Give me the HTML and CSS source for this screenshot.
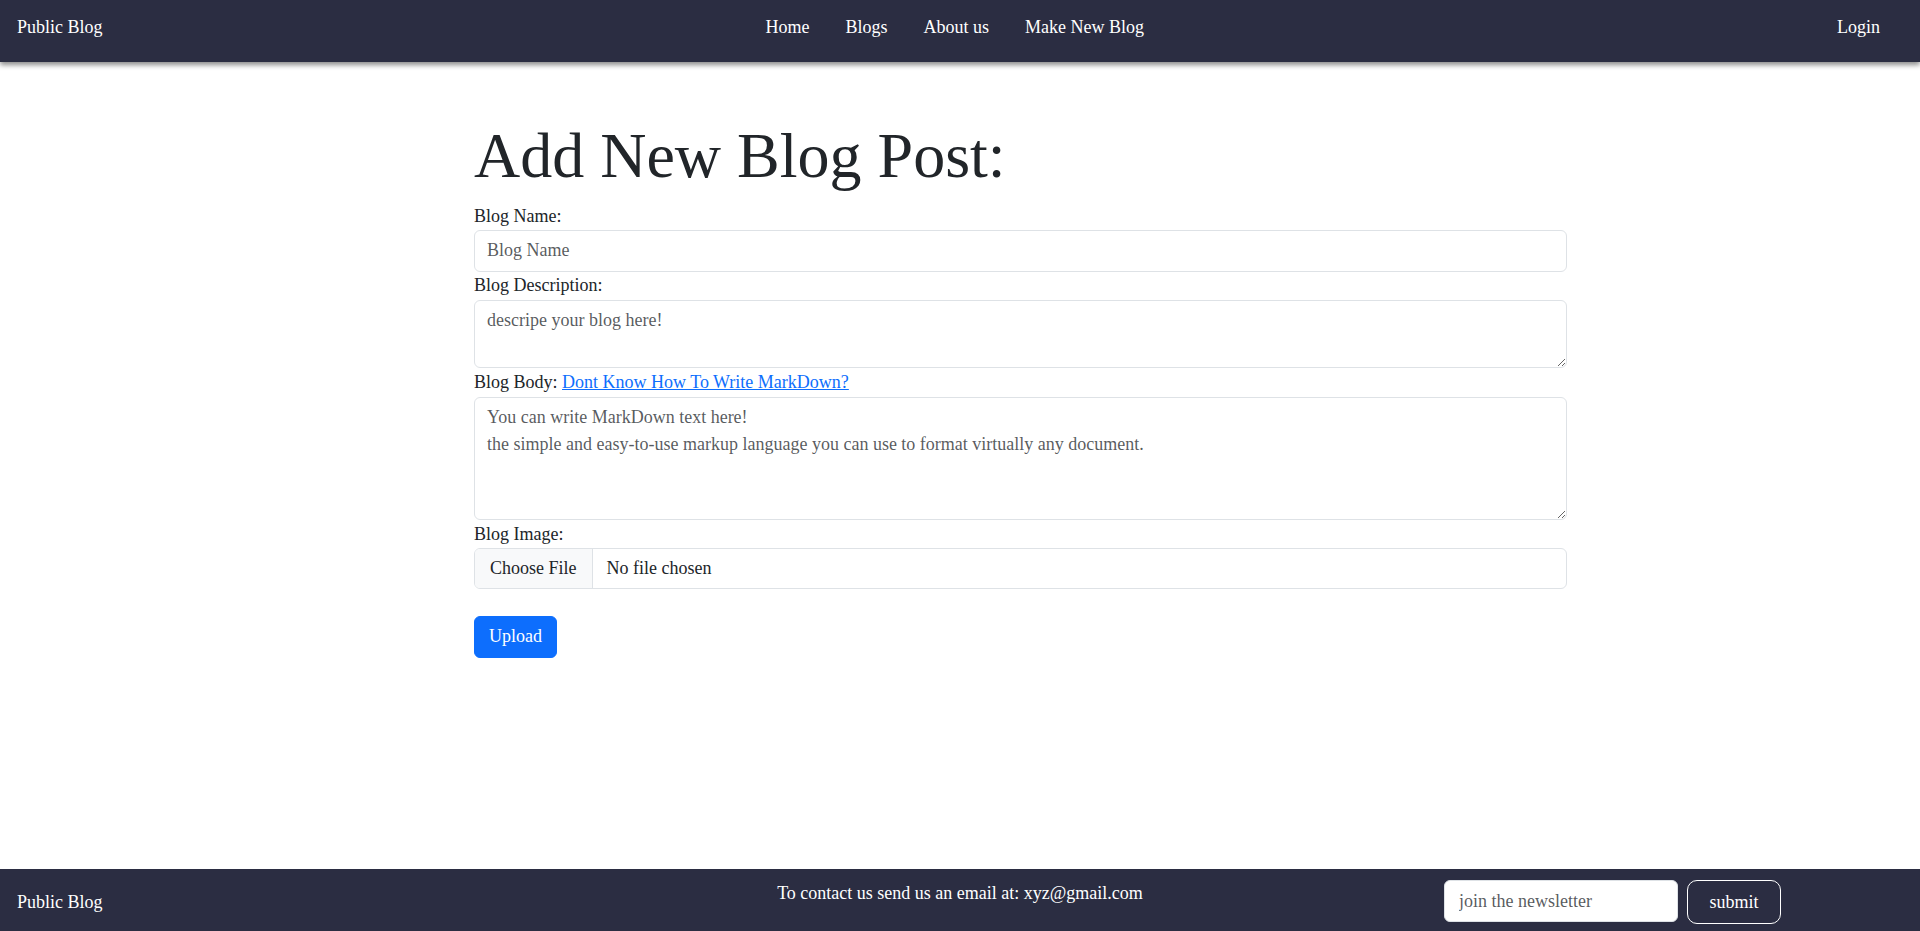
FILE: index.html
```html
<!DOCTYPE html>
<html lang="en">
<head>
<meta charset="utf-8">
<title>Public Blog - Add New Blog Post</title>
<link rel="stylesheet" href="styles.css">
</head>
<body>
<nav class="navbar">
  <a class="brand" href="#">Public Blog</a>
  <ul class="nav-links">
    <li><a href="#">Home</a></li>
    <li><a href="#">Blogs</a></li>
    <li><a href="#">About us</a></li>
    <li><a href="#">Make New Blog</a></li>
  </ul>
  <a class="login" href="#">Login</a>
</nav>

<main class="page">
  <form class="post-form">
    <h1 class="title">Add New Blog Post:</h1>
    <label class="field-label" for="name">Blog Name:</label>
    <input class="field" id="name" type="text" placeholder="Blog Name">
    <label class="field-label" for="desc">Blog Description:</label>
    <textarea class="field area area-desc" id="desc" placeholder="descripe your blog here!"></textarea>
    <label class="field-label" for="body">Blog Body: <a class="md-link" href="#">Dont Know How To Write MarkDown?</a></label>
    <textarea class="field area area-body" id="body" placeholder="You can write MarkDown text here!&#10;the simple and easy-to-use markup language you can use to format virtually any document."></textarea>
    <label class="field-label" for="img">Blog Image:</label>
    <input class="field file" id="img" type="file">
    <button class="btn-upload" type="button">Upload</button>
  </form>
</main>

<footer class="footer">
  <span class="foot-brand">Public Blog</span>
  <p class="contact">To contact us send us an email at: xyz@gmail.com</p>
  <form class="newsletter">
    <input class="news-input" type="email" placeholder="join the newsletter">
    <button class="news-btn" type="button">submit</button>
  </form>
</footer>
</body>
</html>
```

FILE: styles.css
```css
* { box-sizing: border-box; }

html, body { height: 100%; }

body {
  margin: 0;
  min-height: 100vh;
  display: flex;
  flex-direction: column;
  font-family: "Liberation Serif", "Times New Roman", serif;
  font-size: 18px;
  line-height: 1.5;
  color: #212529;
  background: #fff;
}

a { text-decoration: none; color: inherit; }

/* NAVBAR */
.navbar {
  height: 62px;
  flex: 0 0 auto;
  display: flex;
  align-items: flex-start;
  padding: 14px 40px 0 17px;
  background: #2b2d42;
  color: #fff;
  box-shadow: 0 3px 5px rgba(0, 0, 0, 0.45);
  position: relative;
  z-index: 2;
}

.brand { color: #fff; }

.nav-links {
  list-style: none;
  margin: 0 0 0 663px;
  padding: 0;
  display: flex;
  gap: 36px;
}

.nav-links a { color: #fff; }

.login { margin-left: auto; color: #fff; }

/* MAIN */
.page {
  flex: 1 0 auto;
  padding: 56px 0 0 474px;
}

.post-form {
  width: 1093px;
  display: flex;
  flex-direction: column;
}

.title {
  margin: 0 0 8px 0;
  font-size: 64px;
  font-weight: 300;
  line-height: 1.2;
  color: #212529;
}

.field-label {
  display: block;
  line-height: 27px;
}

.md-link {
  color: #0d6efd;
  text-decoration: underline;
}

.field {
  display: block;
  width: 100%;
  font-family: inherit;
  font-size: 18px;
  line-height: 27px;
  color: #212529;
  background: #fff;
  border: 1px solid #dee2e6;
  border-radius: 6px;
  padding: 6px 12px;
  margin: 0;
}

input.field { height: 42px; }

.field::placeholder { color: rgba(33, 37, 41, 0.75); opacity: 1; }

.area {
  margin: 1px 0;
  resize: vertical;
}

.area-desc { height: 68px; }
.area-body { height: 123px; }

input.file {
  height: 41px;
  padding: 0;
  overflow: hidden;
  line-height: 39px;
}

.file::file-selector-button {
  font-family: inherit;
  font-size: 18px;
  color: #212529;
  background: #f8f9fa;
  border: 0;
  border-right: 1px solid #dee2e6;
  border-radius: 0;
  height: 39px;
  padding: 0 15px;
  margin: 0 14px 0 0;
}

.btn-upload {
  align-self: flex-start;
  margin-top: 27px;
  height: 42px;
  padding: 0 14px;
  font-family: inherit;
  font-size: 18px;
  line-height: 27px;
  color: #fff;
  background: #0d6efd;
  border: 1px solid #0d6efd;
  border-radius: 6px;
}

/* FOOTER */
.footer {
  flex: 0 0 auto;
  height: 62px;
  display: grid;
  grid-template-columns: 1fr auto 1fr;
  align-items: center;
  padding: 4px 17px 0 17px;
  background: #2b2d42;
  color: #fff;
}

.foot-brand { justify-self: start; }

.contact {
  margin: 7px 0 0 0;
  align-self: start;
}

.newsletter {
  justify-self: end;
  margin-right: 122px;
  display: flex;
  align-items: flex-start;
  gap: 9px;
}

.news-input {
  width: 234px;
  height: 42px;
  padding: 0 14px;
  font-family: inherit;
  font-size: 18px;
  color: #212529;
  background: #fff;
  border: 1px solid #dee2e6;
  border-radius: 6px;
}

.news-input::placeholder { color: rgba(33, 37, 41, 0.75); opacity: 1; }

.news-btn {
  width: 94px;
  height: 44px;
  font-family: inherit;
  font-size: 18px;
  color: #fff;
  background: transparent;
  border: 1px solid #fff;
  border-radius: 10px;
}
```
